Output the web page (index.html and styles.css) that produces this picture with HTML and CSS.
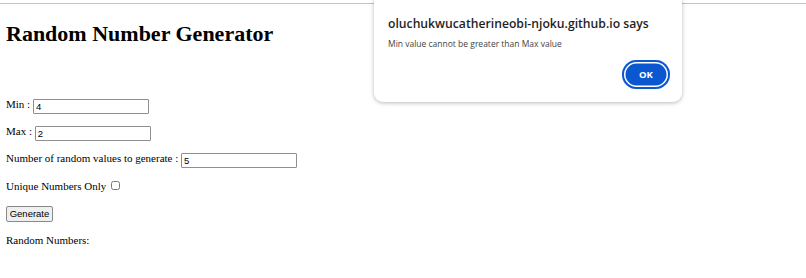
FILE: index.html
```
<!DOCTYPE html>
<html>
<head>
<meta charset="utf-8">
<link rel="stylesheet" href="styles.css">
</head>
<body>
<div class="topbar"></div>
<main class="page">
  <h1 class="title">Random Number Generator</h1>
  <p class="row">Min : <input class="field" type="text" value="4"></p>
  <p class="row">Max : <input class="field" type="text" value="2"></p>
  <p class="row">Number of random values to generate : <input class="field" type="text" value="5"></p>
  <p class="row">Unique Numbers Only <input class="check" type="checkbox"></p>
  <p class="row"><button class="btn">Generate</button></p>
  <p class="row">Random Numbers:</p>
</main>
<div class="dialog">
  <div class="dlg-title">oluchukwucatherineobi-njoku.github.io says</div>
  <div class="dlg-msg">Min value cannot be greater than Max value</div>
  <div class="dlg-actions"><button class="ok">OK</button></div>
</div>
</body>
</html>
```
FILE: styles.css
```
html, body {
  margin: 0;
  padding: 0;
  background: #fff;
}
body {
  font-family: "Liberation Serif", "Times New Roman", serif;
  font-size: 11px;
  color: #000;
}
.topbar {
  height: 3px;
  border-bottom: 1px solid #c4c4c4;
}
.page {
  padding: 0 6px;
}
.title {
  font-size: 22px;
  font-weight: bold;
  margin: 17px 0 0 0;
  line-height: 26px;
}
.row {
  margin: 0;
  line-height: 15px;
  height: 15px;
  margin-top: 12.2px;
}
.title + .row {
  margin-top: 50px;
}
.field {
  box-sizing: border-box;
  width: 116px;
  height: 15px;
  border: 1px solid #8f8f8f;
  border-radius: 1px;
  padding: 0 2px;
  font-family: "Liberation Sans", Arial, sans-serif;
  font-size: 9.5px;
  vertical-align: -2px;
  margin: 0;
}
.check {
  width: 9px;
  height: 9px;
  margin: 0 0 0 2px;
  vertical-align: 0;
}
.btn {
  box-sizing: border-box;
  font-family: "Liberation Sans", Arial, sans-serif;
  font-size: 9.5px;
  width: 47px;
  height: 16px;
  padding: 0;
  border: 1px solid #8a8a8a;
  border-radius: 2px;
  background: #efefef;
  margin: 0;
  line-height: 12px;
}
.dialog {
  position: absolute;
  left: 374px;
  top: -6px;
  width: 308px;
  height: 108px;
  box-sizing: border-box;
  background: #fff;
  border-radius: 9px;
  box-shadow: 0 1px 4px rgba(0,0,0,0.28);
  padding: 22px 14px 0 14px;
  font-family: "Open Sans", "Noto Sans", sans-serif;
}
.dlg-title {
  font-size: 12.2px;
  font-weight: 600;
  color: #1f1f1f;
  line-height: 16px;
}
.dlg-msg {
  font-size: 8.5px;
  color: #444;
  margin-top: 6px;
  line-height: 12px;
}
.dlg-actions {
  display: flex;
  justify-content: flex-end;
  margin-top: 10px;
}
.ok {
  box-sizing: border-box;
  width: 48px;
  height: 29px;
  padding: 0;
  border-radius: 15px;
  border: none;
  background: #0b57d0;
  color: #fff;
  font-family: "Open Sans", "Noto Sans", sans-serif;
  font-weight: 700;
  font-size: 9.5px;
  box-shadow: inset 0 0 0 2px #0b57d0, inset 0 0 0 3.5px #fff;
  margin-right: -2px;
}
```
